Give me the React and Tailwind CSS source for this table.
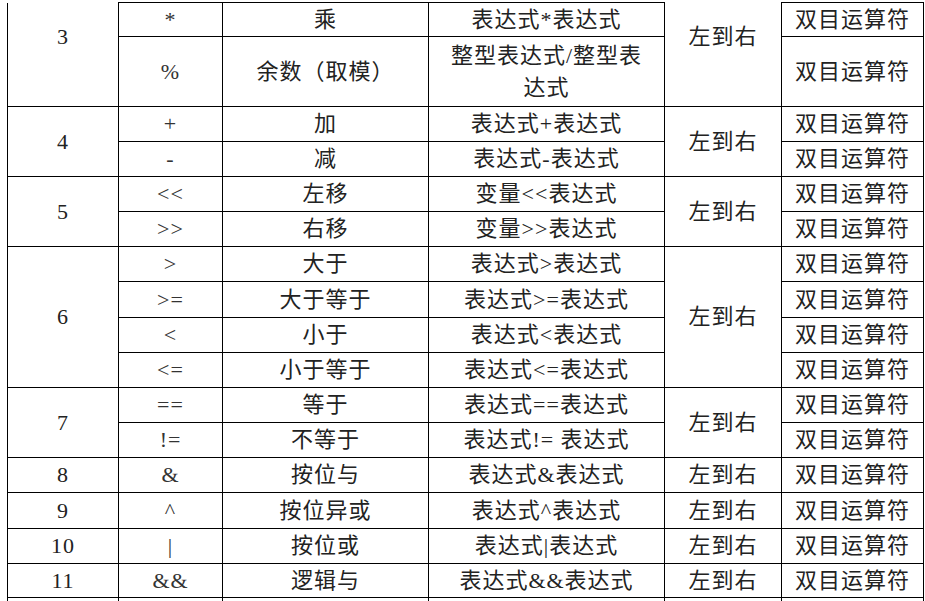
import React from "react";

const groups = [
  {
    p: "3",
    open: true,
    rows: [
      { op: "*", name: "乘", form: "表达式*表达式", h: "h-[34px]" },
      {
        op: "%",
        name: "余数（取模）",
        form: (
          <>
            整型表达式/整型表
            <br />
            达式
          </>
        ),
        h: "h-[70px]",
      },
    ],
  },
  {
    p: "4",
    rows: [
      { op: "+", name: "加", form: "表达式+表达式", h: "h-[35px]" },
      { op: "-", name: "减", form: "表达式-表达式", h: "h-[35px]" },
    ],
  },
  {
    p: "5",
    rows: [
      { op: "<<", name: "左移", form: "变量<<表达式", h: "h-[35px]" },
      { op: ">>", name: "右移", form: "变量>>表达式", h: "h-[35px]" },
    ],
  },
  {
    p: "6",
    rows: [
      { op: ">", name: "大于", form: "表达式>表达式", h: "h-[35px]" },
      { op: ">=", name: "大于等于", form: "表达式>=表达式", h: "h-[36px]" },
      { op: "<", name: "小于", form: "表达式<表达式", h: "h-[35px]" },
      { op: "<=", name: "小于等于", form: "表达式<=表达式", h: "h-[35px]" },
    ],
  },
  {
    p: "7",
    rows: [
      { op: "==", name: "等于", form: "表达式==表达式", h: "h-[35px]" },
      { op: "!=", name: "不等于", form: "表达式!= 表达式", h: "h-[35px]" },
    ],
  },
  { p: "8", rows: [{ op: "&", name: "按位与", form: "表达式&表达式", h: "h-[35px]" }] },
  { p: "9", rows: [{ op: "^", name: "按位异或", form: "表达式^表达式", h: "h-[36px]" }] },
  { p: "10", rows: [{ op: "|", name: "按位或", form: "表达式|表达式", h: "h-[35px]" }] },
  { p: "11", rows: [{ op: "&&", name: "逻辑与", form: "表达式&&表达式", h: "h-[34px]" }] },
];

const cell = "border border-black p-0 text-center align-middle";

function App() {
  return (
    <div className="h-[601px] w-[925px] overflow-hidden bg-white pl-[7px] pt-[2px]">
      <table
        className="w-[916px] table-fixed border-collapse text-[22px] leading-[32px] tracking-[1px] text-[#222]"
        style={{ fontFamily: '"Liberation Serif", "Noto Sans CJK SC", serif' }}
      >
        <colgroup>
          <col className="w-[111px]" />
          <col className="w-[104px]" />
          <col className="w-[206px]" />
          <col className="w-[236px]" />
          <col className="w-[117px]" />
          <col className="w-[142px]" />
        </colgroup>
        <tbody>
          {groups.map((g) =>
            g.rows.map((r, i) => (
              <tr key={g.p + r.op} className={r.h}>
                {i === 0 && (
                  <td
                    rowSpan={g.rows.length}
                    className={cell + (g.open ? " border-t-0 pb-[34px]" : "")}
                  >
                    {g.p}
                  </td>
                )}
                <td className={cell + " text-[#333]"}>{r.op}</td>
                <td className={cell}>{r.name}</td>
                <td className={cell}>{r.form}</td>
                {i === 0 && (
                  <td
                    rowSpan={g.rows.length}
                    className={cell + (g.open ? " border-t-0 pb-[34px]" : "")}
                  >
                    左到右
                  </td>
                )}
                <td className={cell}>双目运算符</td>
              </tr>
            ))
          )}
          <tr className="h-[10px]">
            <td className={cell} />
            <td className={cell} />
            <td className={cell} />
            <td className={cell} />
            <td className={cell} />
            <td className={cell} />
          </tr>
        </tbody>
      </table>
    </div>
  );
}

export default App;
